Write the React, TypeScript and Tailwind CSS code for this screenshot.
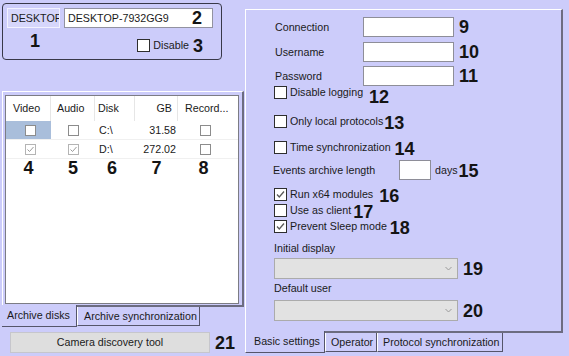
import React from "react";

function Num({ children, className = "" }: { children: React.ReactNode; className?: string }) {
  return <span className={"font-bold leading-none text-[18px] text-[#141414] " + className}>{children}</span>;
}

function Box({ checked = false }: { checked?: boolean }) {
  return (
    <span className="w-[13px] h-[13px] shrink-0 border border-[#2e2e2e] bg-white flex items-center justify-center">
      {checked && (
        <svg width="11" height="11" viewBox="0 0 11 11">
          <path d="M2 5.5 L4.3 8 L9 2.5" fill="none" stroke="#5a5a5a" strokeWidth="1.3" />
        </svg>
      )}
    </span>
  );
}

function SmallBox({ checked = false }: { checked?: boolean }) {
  return (
    <span
      className={
        "w-[11px] h-[11px] shrink-0 border bg-white flex items-center justify-center " +
        (checked ? "border-[#b4b4b4]" : "border-[#8c8c8c]")
      }
    >
      {checked && (
        <svg width="9" height="9" viewBox="0 0 9 9">
          <path d="M1.5 4.5 L3.5 6.5 L7.5 2" fill="none" stroke="#9a9a9a" strokeWidth="1" />
        </svg>
      )}
    </span>
  );
}

function CheckRow({
  label,
  checked = false,
  num,
  numCls = "",
  cls = "",
}: {
  label: string;
  checked?: boolean;
  num: string;
  numCls?: string;
  cls?: string;
}) {
  return (
    <div className={"flex items-center h-[13px] " + cls}>
      <Box checked={checked} />
      <span className="ml-[3px] whitespace-nowrap">{label}</span>
      <Num className={numCls}>{num}</Num>
    </div>
  );
}

function Select() {
  return (
    <div className="w-[184px] h-[21px] bg-[#e2e2e2] border border-[#ababab] flex items-center justify-end pr-[5px]">
      <svg width="7" height="5" viewBox="0 0 7 5">
        <path d="M0.5 1 L3.5 4 L6.5 1" fill="none" stroke="#9a9a9a" strokeWidth="1" />
      </svg>
    </div>
  );
}

export default function App() {
  return (
    <div className="w-[569px] h-[356px] bg-[#ccccfa] flex font-['Liberation_Sans',sans-serif] text-[10.7px] text-[#1a1a1a] overflow-hidden">
      {/* Left column */}
      <div className="w-[245px] pl-[2px] flex flex-col">
        {/* group box */}
        <div className="mt-[3px] w-[220px] h-[57px] rounded-[4px] border border-[#383848] flex flex-col">
          <div className="flex mt-[4px] ml-[4px]">
            <div className="w-[53px] h-[20px] bg-[#d6d6fb] border border-[#f2f2ff] overflow-hidden whitespace-nowrap pl-[3px] flex items-center">
              <span>DESKTOP</span>
            </div>
            <div className="ml-[4px] w-[149px] h-[20px] bg-white border border-[#9292a0] flex items-center justify-between pl-[3px] pr-[10px]">
              <span>DESKTOP-7932GG9</span>
              <Num>2</Num>
            </div>
          </div>
          <div className="flex items-start">
            <Num className="ml-[27px] mt-[4px] text-[17px]">1</Num>
            <div className="ml-auto mr-[18px] mt-[11px] flex items-center h-[13px]">
              <Box />
              <span className="ml-[3px]">Disable</span>
              <Num className="ml-[4px] text-[17px]">3</Num>
            </div>
          </div>
        </div>

        {/* tab panel */}
        <div className="mt-[31px] w-[242px] h-[216px] border-t border-l border-white border-r-2 border-b-2 border-r-[#6c6c80] border-b-[#6c6c80] pl-[2px] pt-[3px]">
          <div className="w-[234px] h-[209px] bg-white border border-[#7c7c84] flex flex-col">
            <div className="grid grid-cols-[45px_44px_40px_43px_60px] h-[25px]">
              <div className="border-r border-[#e6e6e6] flex items-center pl-[7px]">Video</div>
              <div className="border-r border-[#e6e6e6] flex items-center pl-[6px]">Audio</div>
              <div className="border-r border-[#e6e6e6] flex items-center pl-[3px]">Disk</div>
              <div className="border-r border-[#e6e6e6] flex items-center justify-end pr-[5px]">GB</div>
              <div className="flex items-center pl-[7px]">Record...</div>
            </div>
            <div className="grid grid-cols-[45px_44px_40px_43px_60px] h-[19px] border-b border-[#f0f0f0]">
              <div className="bg-[#a9bedb] flex items-center justify-center pl-[3px]">
                <SmallBox />
              </div>
              <div className="flex items-center justify-center">
                <SmallBox />
              </div>
              <div className="flex items-center pl-[4px]">C:\</div>
              <div className="flex items-center justify-end pr-[2px]">31.58</div>
              <div className="flex items-center justify-center pr-[5px]">
                <SmallBox />
              </div>
            </div>
            <div className="grid grid-cols-[45px_44px_40px_43px_60px] h-[19px] border-b border-[#f0f0f0]">
              <div className="flex items-center justify-center pl-[3px]">
                <SmallBox checked />
              </div>
              <div className="flex items-center justify-center">
                <SmallBox checked />
              </div>
              <div className="flex items-center pl-[4px]">D:\</div>
              <div className="flex items-center justify-end pr-[2px]">272.02</div>
              <div className="flex items-center justify-center pr-[5px]">
                <SmallBox />
              </div>
            </div>
            <div className="grid grid-cols-[45px_44px_40px_43px_60px] h-[18px] items-center">
              <div className="flex justify-center">
                <Num className="text-[16px]">4</Num>
              </div>
              <div className="flex justify-center">
                <Num className="text-[16px]">5</Num>
              </div>
              <div className="flex justify-center pr-[6px]">
                <Num className="text-[16px]">6</Num>
              </div>
              <div className="flex justify-center">
                <Num className="text-[16px]">7</Num>
              </div>
              <div className="flex justify-center pr-[9px]">
                <Num className="text-[16px]">8</Num>
              </div>
            </div>
          </div>
        </div>

        {/* tabs */}
        <div className="flex">
          <div className="w-[75px] h-[22px] flex items-center pl-[5px] -mt-[2px] bg-[#ccccfa] border-r border-b border-r-[#55556a] border-b-[#55556a]">
            Archive disks
          </div>
          <div className="w-[123px] h-[19px] flex items-center pl-[6px] border-l border-white border-r border-b border-r-[#55556a] border-b-[#55556a]">
            Archive synchronization
          </div>
        </div>

        {/* button */}
        <div className="mt-[5px] flex items-center">
          <div className="ml-[8px] w-[200px] h-[21px] bg-[#dedede] border border-[#c6c6cc] flex items-center justify-center">
            Camera discovery tool
          </div>
          <Num className="ml-[5px]">21</Num>
        </div>
      </div>

      {/* Right column */}
      <div className="flex flex-col">
        <div className="mt-[9px] w-[318px] h-[324px] border-t border-l border-white border-r-2 border-b-2 border-r-[#6c6c80] border-b-[#6c6c80] flex flex-col pl-[28px]">
          <div className="mt-[7px] flex items-center h-[20px]">
            <span className="w-[89px] pl-[1px]">Connection</span>
            <div className="w-[91px] h-[20px] bg-white border border-[#8e8e98]" />
            <Num className="ml-[5px]">9</Num>
          </div>
          <div className="mt-[5px] flex items-center h-[20px]">
            <span className="w-[89px] pl-[1px]">Username</span>
            <div className="w-[91px] h-[20px] bg-white border border-[#8e8e98]" />
            <Num className="ml-[5px]">10</Num>
          </div>
          <div className="mt-[4px] flex items-center h-[20px]">
            <span className="w-[89px] pl-[1px]">Password</span>
            <div className="w-[91px] h-[20px] bg-white border border-[#8e8e98]" />
            <Num className="ml-[5px]">11</Num>
          </div>
          <CheckRow label="Disable logging" num="12" numCls="ml-[6px] mt-[8px]" cls="mt-[0px]" />
          <CheckRow label="Only local protocols" num="13" numCls="ml-[1px] mt-[2px]" cls="mt-[16px]" />
          <CheckRow label="Time synchronization" num="14" numCls="ml-[4px] mt-[2px]" cls="mt-[13px]" />
          <div className="mt-[6px] flex items-center h-[20px]">
            <span className="w-[126px] -ml-[1px]">Events archive length</span>
            <div className="w-[32px] h-[20px] bg-white border border-[#8e8e98]" />
            <span className="ml-[4px]">days</span>
            <Num className="ml-[1px] mt-[2px]">15</Num>
          </div>
          <CheckRow label="Run x64 modules" checked num="16" numCls="ml-[6px] mt-[2px]" cls="mt-[8px]" />
          <CheckRow label="Use as client" num="17" numCls="ml-[2px] mt-[2px]" cls="mt-[3px]" />
          <CheckRow label="Prevent Sleep mode" checked num="18" numCls="ml-[3px] mt-[2px]" cls="mt-[3px]" />
          <div className="mt-[9px] h-[13px] flex items-center">Initial display</div>
          <div className="mt-[3px] flex items-center">
            <Select />
            <Num className="ml-[5px]">19</Num>
          </div>
          <div className="mt-[3px] h-[13px] flex items-center">Default user</div>
          <div className="mt-[5px] flex items-center">
            <Select />
            <Num className="ml-[5px]">20</Num>
          </div>
        </div>
        <div className="flex">
          <div className="w-[80px] h-[22px] -mt-[2px] bg-[#ccccfa] flex items-center pl-[8px] border-l border-white border-r border-b border-r-[#55556a] border-b-[#55556a]">
            Basic settings
          </div>
          <div className="w-[52px] h-[19px] flex items-center pl-[5px] border-l border-white border-r border-b border-r-[#55556a] border-b-[#55556a]">
            Operator
          </div>
          <div className="w-[126px] h-[19px] flex items-center pl-[5px] border-l border-white border-r border-b border-r-[#55556a] border-b-[#55556a]">
            Protocol synchronization
          </div>
        </div>
      </div>
    </div>
  );
}
